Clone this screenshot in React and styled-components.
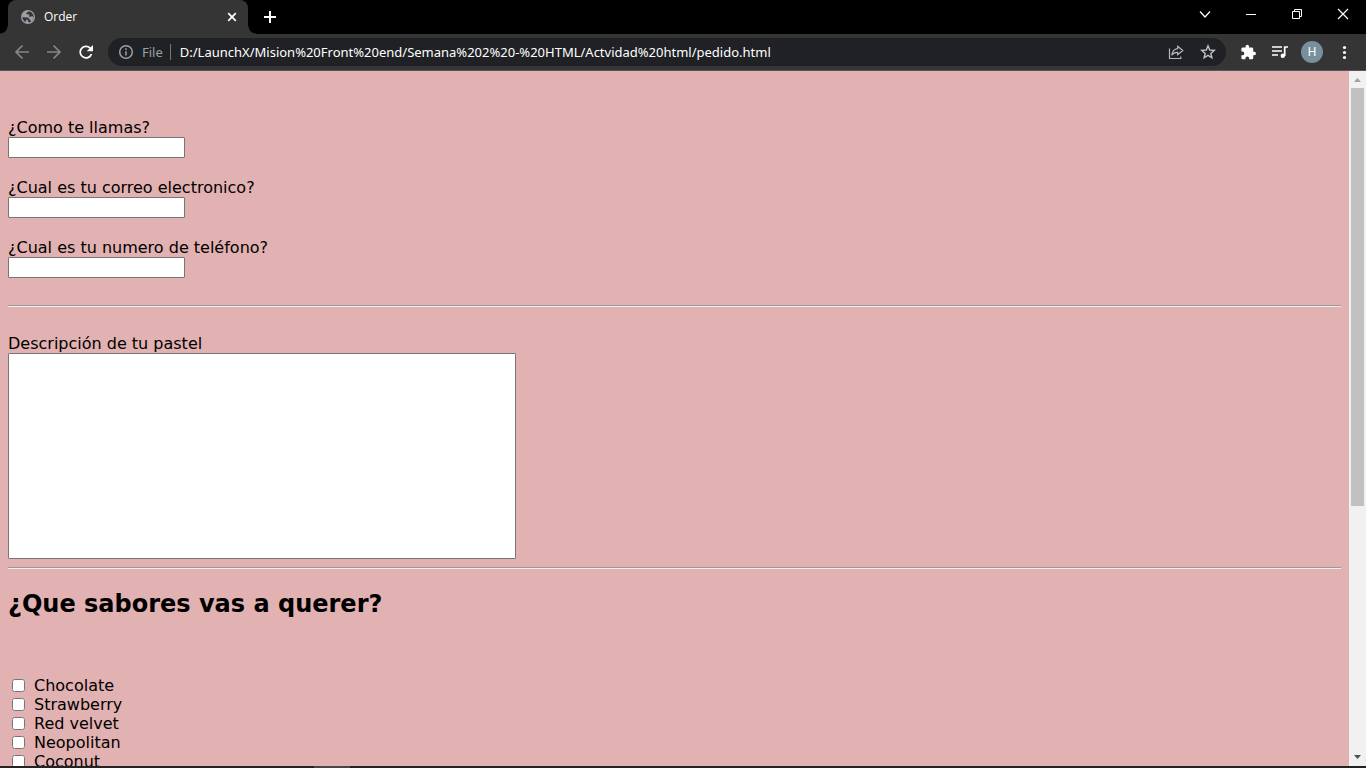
import React from "react";
import styled, { createGlobalStyle } from "styled-components";

const GlobalStyle = createGlobalStyle`
  *, *::before, *::after { box-sizing: border-box; }
  body { margin: 0; background: #e2b1b1; }
`;

const Browser = styled.div`
  display: flex;
  flex-direction: column;
  height: 100vh;
  overflow: hidden;
  font-family: "Open Sans", "Noto Sans", sans-serif;
`;

const TabStrip = styled.header`
  display: flex;
  flex: none;
  height: 34px;
  padding-left: 8px;
  background: #000;
`;

const Tab = styled.div`
  position: relative;
  display: flex;
  align-items: center;
  width: 240px;
  padding: 0 8px 0 12px;
  border-radius: 8px 8px 0 0;
  background: #353535;
  color: #fff;
  font-size: 12px;

  &::before,
  &::after {
    content: "";
    position: absolute;
    bottom: 0;
    width: 8px;
    height: 8px;
  }
  &::before {
    left: -8px;
    background: radial-gradient(circle at 0 0, #000 7px, #353535 8px);
  }
  &::after {
    right: -8px;
    background: radial-gradient(circle at 100% 0, #000 7px, #353535 8px);
  }
`;

const TabTitle = styled.span`
  flex: 1;
  margin-left: 8px;
  line-height: 16px;
`;

const IconButton = styled.button`
  display: flex;
  flex: none;
  align-items: center;
  justify-content: center;
  width: ${(p) => p.$width || 32}px;
  height: ${(p) => p.$height || 28}px;
  padding: 0;
  border: 0;
  background: transparent;
  color: ${(p) => p.$color || "#fff"};
`;

const NewTabButton = styled(IconButton)`
  align-self: center;
  margin-left: 6px;
`;

const WindowControls = styled.div`
  display: flex;
  margin-left: auto;
`;

const Toolbar = styled.nav`
  display: flex;
  flex: none;
  align-items: center;
  height: 37px;
  padding: 0 6px;
  border-bottom: 1px solid #5c5457;
  background: #353535;
`;

const AddressBar = styled.div`
  display: flex;
  flex: 1;
  align-items: center;
  height: 28px;
  margin: 0 6px;
  padding: 0 2px 0 10px;
  border-radius: 14px;
  background: #202124;
  color: #9aa0a6;
  font-family: "Noto Sans", sans-serif;
  font-size: 13px;
`;

const Scheme = styled.span`
  margin-left: 8px;
  padding-right: 7px;
  border-right: 1px solid #73767a;
  line-height: 16px;
`;

const AddressInput = styled.input`
  flex: 1;
  min-width: 0;
  height: 24px;
  margin-left: 9px;
  padding: 0;
  border: 0;
  outline: 0;
  background: transparent;
  color: #fff;
  font: inherit;
`;

const Avatar = styled.span`
  display: flex;
  align-items: center;
  justify-content: center;
  width: 22px;
  height: 22px;
  border-radius: 50%;
  background: #78909c;
  font: 12px Roboto, sans-serif;
`;

const Viewport = styled.div`
  display: flex;
  flex: 1;
  min-height: 0;
`;

const Page = styled.main`
  flex: 1;
  min-width: 0;
  padding: 47px 8px 0;
  overflow: hidden;
  background: #e2b1b1;
  color: #000;
  font: 16px/19px Verdana, "DejaVu Sans", sans-serif;
`;

const Fields = styled.div`
  display: flex;
  flex-direction: column;
  gap: 20px;
`;

const Field = styled.div`
  display: flex;
  flex-direction: column;
  align-items: flex-start;
`;

const TextInput = styled.input`
  width: 177px;
  height: 21px;
  padding: 1px 2px;
  border: 1px solid #767676;
  border-radius: 1px;
  background: #fff;
`;

const Description = styled.textarea`
  width: 508px;
  max-width: 100%;
  height: 206px;
  padding: 2px;
  border: 1px solid #767676;
  border-radius: 1px;
  background: #fff;
  resize: none;
`;

const Divider = styled.hr`
  height: 2px;
  margin: ${(p) => p.$gap}px 0;
  border: 0;
  border-top: 1px solid #9a9a9a;
  border-bottom: 1px solid #eee;
`;

const Heading = styled.h2`
  margin: 20px 0 57px;
  font-size: 24px;
  line-height: 30px;
`;

const FlavorList = styled.div`
  display: flex;
  flex-direction: column;
`;

const Flavor = styled.label`
  display: flex;
  align-items: center;
  gap: 9px;
  height: 19px;
`;

const Checkbox = styled.input`
  width: 13px;
  height: 13px;
  margin: 0 0 0 4px;
`;

const ScrollTrack = styled.div`
  display: flex;
  flex: none;
  flex-direction: column;
  width: 17px;
  background: #f1f1f1;
`;

const ScrollBody = styled.div`
  flex: 1;
  padding: 0 2px;
`;

const ScrollThumb = styled.div`
  height: 63.3%;
  background: #c1c1c1;
`;

const Taskbar = styled.footer`
  display: flex;
  flex: none;
  height: 2px;
  padding-left: 23%;
  background: #242225;
`;

const TaskbarItem = styled.div`
  width: 36px;
  background: #484648;
`;

function Icon({ size = 16, box = 16, line, children }) {
  return (
    <svg
      width={size}
      height={size}
      viewBox={`0 0 ${box} ${box}`}
      fill={line ? "none" : "currentColor"}
      stroke={line ? "currentColor" : "none"}
      strokeWidth={line}
      aria-hidden="true"
    >
      {children}
    </svg>
  );
}

const questions = [
  { id: "name", text: "¿Como te llamas?", type: "text" },
  { id: "email", text: "¿Cual es tu correo electronico?", type: "email" },
  { id: "phone", text: "¿Cual es tu numero de teléfono?", type: "tel" },
];

const flavors = ["Chocolate", "Strawberry", "Red velvet", "Neopolitan", "Coconut"];

function Tabs() {
  return (
    <TabStrip>
      <Tab>
        <Icon>
          <circle cx="8" cy="8" r="7" fill="#9aa0a6" />
          <path d="M9 2.3C8 3.3 7 3.2 6.3 4.2 6 5.1 7 5.4 8 5.2c1.2-.2 1.6.6 1.2 1.5-.4.8.3 1.2 1.1 1 .9-.2 1.4-.7 2.3-.3.8.3 1 .9.8 1.7-.3 1.3-1 2.6-2 3.4-.7.2-.9-.7-1.1-1.4-.2-.8-1.2-.7-1.4-1.5-.2-1-.9-1.3-2-1.2L3 8.2l-.6-.8c-.2 2.7 1.4 4.8 3.5 5.6.4-.7-.3-1.4.2-2.1.5-.6 1.6-.2 1.8.7.2 1 .6 1.6 1.4 2 2.5-.4 4.4-2.7 4.4-5.5C13.7 5.2 11.7 2.8 9 2.3z" fill="#353535" />
        </Icon>
        <TabTitle>Order</TabTitle>
        <IconButton $width={16} $height={16} aria-label="Close tab">
          <Icon line={1.7}><path d="m4.2 4.2 7.6 7.6m0-7.6-7.6 7.6" /></Icon>
        </IconButton>
      </Tab>
      <NewTabButton aria-label="New tab">
        <Icon line={2}><path d="M8 2v12M2 8h12" /></Icon>
      </NewTabButton>
      <WindowControls>
        <IconButton $width={46} aria-label="Search tabs">
          <Icon line={1.2}><path d="m3 5.500 5 5.500 5-5.500" /></Icon>
        </IconButton>
        <IconButton $width={46} aria-label="Minimize">
          <Icon line={1}><path d="M3 8.5h10" /></Icon>
        </IconButton>
        <IconButton $width={46} aria-label="Restore">
          <Icon line={1}><path d="M3.5 5.5h7v7h-7zM5.5 5.5v-2h7v7h-2" /></Icon>
        </IconButton>
        <IconButton $width={46} aria-label="Close">
          <Icon line={1.2}><path d="m3 3 10 10M13 3 3 13" /></Icon>
        </IconButton>
      </WindowControls>
    </TabStrip>
  );
}

function Navigation() {
  return (
    <Toolbar>
      <IconButton $color="#85878a" aria-label="Back">
        <Icon line={1.7}><path d="M15 8H2m6.5-6.5L2 8l6.5 6.5" /></Icon>
      </IconButton>
      <IconButton $color="#85878a" aria-label="Forward">
        <Icon line={1.7}><path d="M1 8h13M7.500 1.500 14 8l-6.500 6.500" /></Icon>
      </IconButton>
      <IconButton aria-label="Reload">
        <Icon>
          <path d="M12.700 3.300A6.650 6.650 0 1 0 14.400 10h-1.900A4.900 4.900 0 1 1 11.400 4.600L8.700 7.300H15V1z" />
        </Icon>
      </IconButton>
      <AddressBar>
        <Icon line={1.5}>
          <circle cx="8" cy="8" r="6.3" />
          <path d="M8 7.2v4.3M8 4.3v1.6" />
        </Icon>
        <Scheme>File</Scheme>
        <AddressInput
          aria-label="Address"
          defaultValue="D:/LaunchX/Mision%20Front%20end/Semana%202%20-%20HTML/Actvidad%20html/pedido.html"
        />
        <IconButton $color="#b4b6b9" aria-label="Share">
          <Icon line={1.2}>
            <path d="M1.500 4.500v10h11.300v-2M9.700 2.300 14.800 6.500 9.700 10.700V8.300C7 8.200 5 9 3.800 11.200 4.200 7.500 6 5.200 9.700 4.700z" />
          </Icon>
        </IconButton>
        <IconButton $color="#bdc1c6" aria-label="Bookmark">
          <Icon line={1.4}>
            <path d="m8 1.800 1.700 4.200 4.600.4-3.500 3 1.100 4.400L8 11.400l-3.900 2.400 1.100-4.400-3.500-3L6.300 6z" />
          </Icon>
        </IconButton>
      </AddressBar>
      <IconButton aria-label="Extensions">
        <Icon box={23}>
          <path d="M20.500 11H19V7a2 2 0 0 0-2-2h-4V3.500a2.500 2.500 0 0 0-5 0V5H4a2 2 0 0 0-2 2v3.800h1.500a2.700 2.700 0 0 1 0 5.400H2V20a2 2 0 0 0 2 2h3.800v-1.500a2.700 2.700 0 0 1 5.400 0V22H17a2 2 0 0 0 2-2v-4h1.500a2.500 2.500 0 0 0 0-5z" />
        </Icon>
      </IconButton>
      <IconButton aria-label="Media controls">
        <Icon line={1.7}>
          <path d="M0 3h10M0 7h10M0 11h6M16 3h-3.300v9" />
          <circle cx="10.800" cy="11.800" r="2.200" fill="currentColor" stroke="none" />
        </Icon>
      </IconButton>
      <IconButton aria-label="Profile">
        <Avatar>H</Avatar>
      </IconButton>
      <IconButton aria-label="Menu">
        <Icon>
          <circle cx="8.500" cy="3.500" r="1.600" />
          <circle cx="8.500" cy="8.500" r="1.600" />
          <circle cx="8.500" cy="13.500" r="1.600" />
        </Icon>
      </IconButton>
    </Toolbar>
  );
}

function OrderForm() {
  return (
    <Page>
      <Fields>
        {questions.map((q) => (
          <Field key={q.id}>
            <label htmlFor={q.id}>{q.text}</label>
            <TextInput id={q.id} type={q.type} />
          </Field>
        ))}
      </Fields>
      <Divider $gap={27} />
      <Field>
        <label htmlFor="description">Descripción de tu pastel</label>
        <Description id="description" />
      </Field>
      <Divider $gap={8} />
      <Heading>¿Que sabores vas a querer?</Heading>
      <FlavorList>
        {flavors.map((flavor) => (
          <Flavor key={flavor}>
            <Checkbox type="checkbox" />
            {flavor}
          </Flavor>
        ))}
      </FlavorList>
    </Page>
  );
}

export default function App() {
  return (
    <Browser>
      <GlobalStyle />
      <Tabs />
      <Navigation />
      <Viewport>
        <OrderForm />
        <ScrollTrack>
          <IconButton $width={17} $height={17} $color="#a3a3a3" aria-label="Scroll up">
            <Icon size={17} box={17}><path d="M5 11h7L8.500 7z" /></Icon>
          </IconButton>
          <ScrollBody>
            <ScrollThumb />
          </ScrollBody>
          <IconButton $width={17} $height={17} $color="#505050" aria-label="Scroll down">
            <Icon size={17} box={17}><path d="M5 6h7l-3.500 4z" /></Icon>
          </IconButton>
        </ScrollTrack>
      </Viewport>
      <Taskbar>
        <TaskbarItem />
      </Taskbar>
    </Browser>
  );
}
